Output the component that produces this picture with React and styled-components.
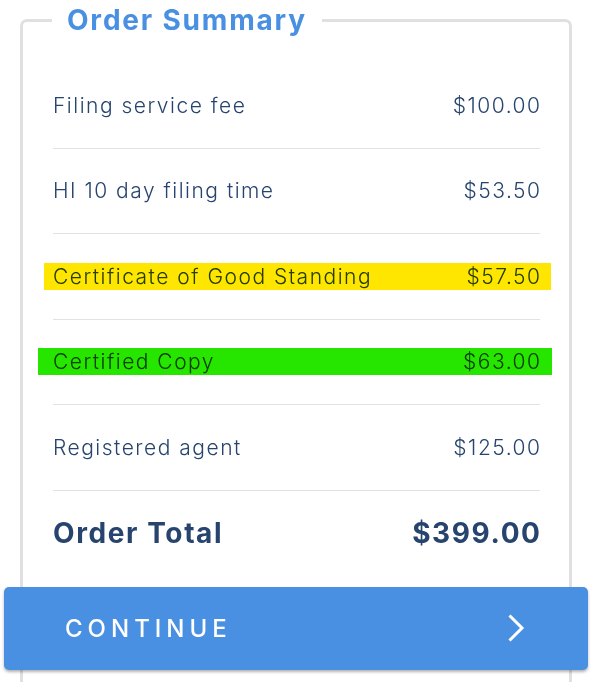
import styled, { createGlobalStyle } from 'styled-components';

const items = [
  { label: 'Filing service fee', price: '$100.00' },
  { label: 'HI 10 day filing time', price: '$53.50' },
  {
    label: 'Certificate of Good Standing',
    price: '$57.50',
    highlight: '#ffe600',
    inset: [9, 11],
  },
  {
    label: 'Certified Copy',
    price: '$63.00',
    highlight: '#26e600',
    inset: [15, 12],
  },
  { label: 'Registered agent', price: '$125.00' },
];

const GlobalStyle = createGlobalStyle`
  html, body {
    margin: 0;
    padding: 0;
    background: #fff;
    overflow: hidden;
  }
  body {
    font-family: 'Inter', 'Open Sans', sans-serif;
    -webkit-font-smoothing: antialiased;
  }
`;

function App() {
  return (
    <>
      <GlobalStyle />
      <Summary>
        <Legend>Order Summary</Legend>
        {items.map((item) => (
          <Row key={item.label}>
            <Line
              $highlight={item.highlight}
              $left={item.inset ? item.inset[0] : 0}
              $right={item.inset ? item.inset[1] : 0}
            >
              <span>{item.label}</span>
              <Price>{item.price}</Price>
            </Line>
          </Row>
        ))}
        <TotalRow>
          <span>Order Total</span>
          <Price>$399.00</Price>
        </TotalRow>
        <ContinueButton type='button'>
          <span>CONTINUE</span>
          <svg width='18' height='30' viewBox='0 0 18 30' aria-hidden='true'>
            <polyline
              points='2.5,2.5 15,15 2.5,27.5'
              fill='none'
              stroke='#fff'
              strokeWidth='3'
            />
          </svg>
        </ContinueButton>
      </Summary>
    </>
  );
}

const Summary = styled.fieldset`
  margin: 4px 29px 0 20px;
  padding: 27px 29px 60px 30px;
  border: 3px solid #e0e0e0;
  border-radius: 7px;
  min-width: 0;
`;

const Legend = styled.legend`
  margin-left: -1px;
  padding: 0 15px 0 15px;
  font-size: 28px;
  line-height: 32px;
  font-weight: 700;
  letter-spacing: 1.8px;
  color: #4a90e2;
`;

const Row = styled.div`
  box-sizing: border-box;
  height: 85.5px;
  display: flex;
  align-items: center;
  border-bottom: 1px solid #e2e2e2;
`;

const Line = styled.div`
  flex: 1;
  height: 27px;
  display: flex;
  align-items: center;
  justify-content: space-between;
  margin: 0 -${({ $right }) => $right}px 0 -${({ $left }) => $left}px;
  padding: 0 ${({ $right }) => $right}px 0 ${({ $left }) => $left}px;
  background: ${({ $highlight }) => $highlight || 'transparent'};
  font-size: 21px;
  font-weight: 300;
  letter-spacing: 1.5px;
  color: #27446e;
  & span {
    mix-blend-mode: multiply;
  }
`;

const Price = styled.span`
  margin-right: -1.5px;
`;

const TotalRow = styled.div`
  height: 84px;
  display: flex;
  align-items: center;
  justify-content: space-between;
  font-size: 28px;
  font-weight: 700;
  letter-spacing: 1.6px;
  color: #27446e;
  & ${Price} {
    margin-right: -1.6px;
  }
`;

const ContinueButton = styled.button`
  box-sizing: border-box;
  width: calc(100% + 97px);
  height: 83px;
  margin: 12px -48px 0 -49px;
  padding: 0 63px 0 61px;
  display: flex;
  align-items: center;
  justify-content: space-between;
  border: none;
  border-radius: 5px;
  background: #4a90e2;
  box-shadow: 0 2px 3px rgba(0, 0, 0, 0.3);
  color: #fff;
  font-family: inherit;
  font-size: 24px;
  font-weight: 500;
  letter-spacing: 5px;
  cursor: pointer;
`;

export default App;
